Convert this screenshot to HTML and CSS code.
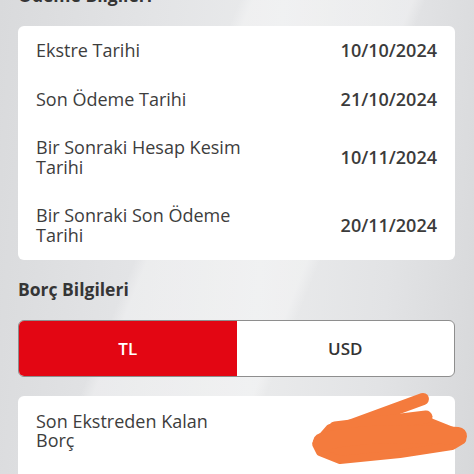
FILE: index.html
```html
<!DOCTYPE html>
<html lang="tr">
<head>
<meta charset="utf-8">
<title>Ödeme Bilgileri</title>
<link rel="stylesheet" href="styles.css">
</head>
<body>
<div class="page">
  <h2 class="section-title top">Ödeme Bilgileri</h2>
  <div class="card">
    <div class="row"><div class="label">Ekstre Tarihi</div><div class="value">10/10/2024</div></div>
    <div class="row"><div class="label">Son Ödeme Tarihi</div><div class="value">21/10/2024</div></div>
    <div class="row"><div class="label">Bir Sonraki Hesap Kesim<br>Tarihi</div><div class="value">10/11/2024</div></div>
    <div class="row"><div class="label">Bir Sonraki Son Ödeme<br>Tarihi</div><div class="value">20/11/2024</div></div>
  </div>
  <h2 class="section-title">Borç Bilgileri</h2>
  <div class="toggle">
    <div class="opt active">TL</div>
    <div class="opt">USD</div>
  </div>
  <div class="card card2">
    <div class="row"><div class="label">Son Ekstreden Kalan<br>Borç</div></div>
    <svg class="scribble" width="160" height="76" viewBox="0 0 160 76">
      <path d="M6 54 L20 38 L70 35 L120 32 L145 42 L152 50 L142 56 L90 64 L30 70 L10 62 Z" fill="#f47b3d" stroke="#f47b3d" stroke-width="8" stroke-linejoin="round"/>
      <line x1="23" y1="42" x2="113" y2="9" stroke="#f47b3d" stroke-width="12" stroke-linecap="round"/>
      <line x1="25" y1="38" x2="116" y2="27" stroke="#f47b3d" stroke-width="13" stroke-linecap="round"/>
      <path d="M12 52 Q60 40 148 46" stroke="#f47b3d" stroke-width="18" stroke-linecap="round" fill="none"/>
    </svg>
  </div>
</div>
</body>
</html>
```

FILE: styles.css
```css
html, body {
  margin: 0;
  padding: 0;
}
body {
  width: 474px;
  height: 474px;
  overflow: hidden;
  font-family: "Open Sans", "Noto Sans", sans-serif;
  color: #3a3a3a;
  background:
    linear-gradient(112deg, rgba(255,255,255,0) 36%, rgba(255,255,255,0.3) 38%, rgba(255,255,255,0.3) 62%, rgba(255,255,255,0) 64%),
    linear-gradient(95deg, #d9dadc 0%, #e3e4e6 30%, #eaebec 55%, #e2e3e5 80%, #d7d8da 100%);
}
.page {
  padding: 0 19px 0 18px;
}
.section-title {
  margin: 0;
  font-size: 17.5px;
  line-height: 20px;
  font-weight: 700;
  color: #353535;
}
.section-title.top {
  margin-top: -15.5px;
  margin-bottom: 21px;
}
.card {
  background: #fff;
  border-radius: 6px;
  padding-top: 1px;
  margin-bottom: 19px;
}
.row {
  display: flex;
  justify-content: space-between;
  align-items: center;
  padding: 14.5px 18px;
  font-size: 18px;
  line-height: 19.5px;
}
.label {
  color: #3d3d3d;
}
.value {
  font-weight: 600;
  color: #3b3b3b;
}
.toggle {
  display: flex;
  height: 57px;
  border: 1px solid #8e8e8e;
  border-radius: 6px;
  overflow: hidden;
  background: #fff;
  box-sizing: border-box;
  margin-top: 21px;
  margin-bottom: 19px;
}
.opt {
  flex: 1;
  display: flex;
  align-items: center;
  justify-content: center;
  font-size: 17px;
  font-weight: 600;
  color: #333;
}
.opt.active {
  background: #e30613;
  color: #fff;
}
.card2 {
  position: relative;
  height: 100px;
  padding-top: 2px;
}
.card2 .row {
  padding-top: 14px;
}
.scribble {
  position: absolute;
  left: 292px;
  top: -6px;
}
```
